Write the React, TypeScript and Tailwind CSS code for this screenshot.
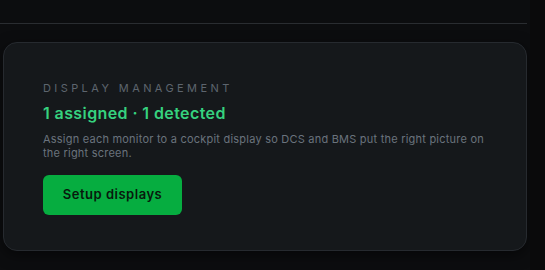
import React from "react";

export default function App() {
  return (
    <div className="flex h-[270px] w-[545px] overflow-hidden bg-[#0c0d0f]" style={{ fontFamily: "Inter, 'Noto Sans', sans-serif" }}>
      <div className="flex w-[530px] flex-col">
        <div className="h-[23px]" />
        <div className="mr-[3px] h-px bg-[#2a2d31]" />
        <div className="h-[18px]" />
        <div className="ml-[3px] mr-[3px] flex h-[209px] flex-col rounded-[14px] border border-[#262a2f] bg-[#15181b] px-[39px] pt-[37px] shadow-[0_4px_14px_rgba(0,0,0,0.5)]">
          <div className="text-[11px] leading-[16px] tracking-[0.31em] text-[#5d656e]">DISPLAY MANAGEMENT</div>
          <div className="mt-[6px] text-[16px] font-semibold leading-[22px] tracking-[0.025em] text-[#36d27f]">1 assigned · 1 detected</div>
          <div className="mt-[8px] max-w-[445px] text-[11px] leading-[14px] tracking-[0.02em] text-[#6a737d]">
            Assign each monitor to a cockpit display so DCS and BMS put the right picture on the right screen.
          </div>
          <button className="mt-[15px] flex h-[40px] w-[139px] items-center justify-center rounded-[6px] bg-[#06ad40] text-[13px] font-semibold tracking-[0.04em] text-[#08190d]">
            Setup displays
          </button>
        </div>
      </div>
      <div className="flex-1 bg-[#0a0a0b]" />
    </div>
  );
}
